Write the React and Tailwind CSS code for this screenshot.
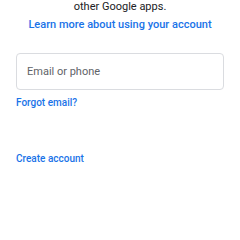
export default function App() {
  return (
    <div className="w-[240px] h-[240px] bg-white overflow-hidden" style={{ fontFamily: "Roboto, 'Noto Sans', sans-serif" }}>
      <div className="flex flex-col items-center">
        <p className="text-[11px] leading-[14px] text-[#202124]">other Google apps.</p>
        <a className="text-[11px] leading-[14px] font-medium text-[#1a73e8] mt-[4px]">Learn more about using your account</a>
      </div>
      <div className="mx-4 mt-[21px] h-[37px] border border-[#dadce0] rounded-[4px] flex items-center px-[10px]">
        <span className="text-[11px] leading-[14px] text-[#5f6368]">Email or phone</span>
      </div>
      <div className="px-4 mt-[6px] text-[10px] leading-[14px] font-medium text-[#1a73e8]">
        <a>Forgot email?</a>
      </div>
      <div className="px-4 mt-[42px] text-[10px] leading-[14px] font-medium text-[#1a73e8]">
        <a>Create account</a>
      </div>
    </div>
  );
}
